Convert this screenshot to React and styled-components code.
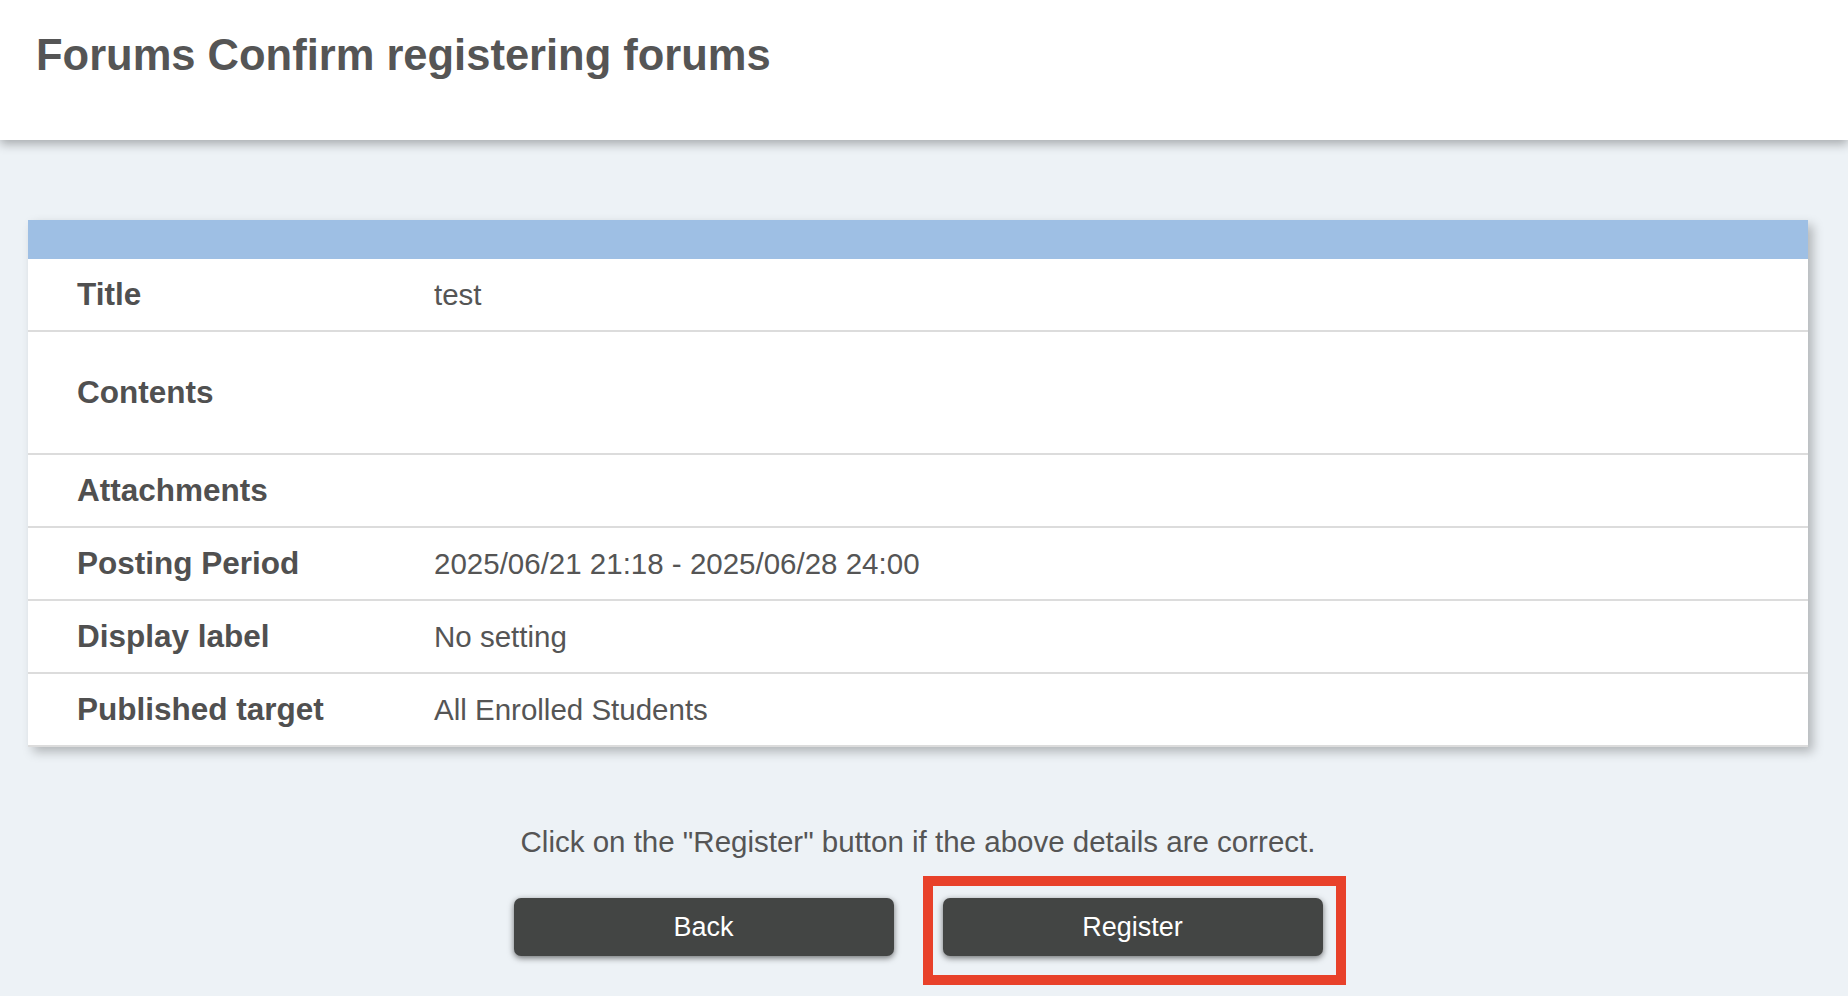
import styled, { createGlobalStyle } from 'styled-components';

const GlobalStyle = createGlobalStyle`
    html, body {
        margin: 0;
        padding: 0;
        background: #edf2f6;
        font-family: "Liberation Sans", Arial, sans-serif;
        color: #555555;
    }
`;

const rows = [
    { label: 'Title', value: 'test' },
    { label: 'Contents', value: '', tall: true },
    { label: 'Attachments', value: '' },
    { label: 'Posting Period', value: '2025/06/21 21:18 - 2025/06/28 24:00' },
    { label: 'Display label', value: 'No setting' },
    { label: 'Published target', value: 'All Enrolled Students' },
];

function App() {
    return (
        <>
            <GlobalStyle />
            <PageStyled>
                <HeaderStyle>
                    <TitleStyle>Forums Confirm registering forums</TitleStyle>
                </HeaderStyle>

                <MainStyle>
                    <CardStyle>
                        <CardHeadStyle />
                        {rows.map(row => (
                            <RowStyle key={row.label} $tall={row.tall}>
                                <LabelStyle>{row.label}</LabelStyle>
                                <ValueStyle>{row.value}</ValueStyle>
                            </RowStyle>
                        ))}
                    </CardStyle>

                    <NoticeStyle>
                        Click on the "Register" button if the above details are
                        correct.
                    </NoticeStyle>

                    <ButtonRowStyle>
                        <ButtonStyle type="button">Back</ButtonStyle>
                        <ButtonSlotStyle>
                            <ButtonStyle type="submit">Register</ButtonStyle>
                            <HighlightStyle />
                        </ButtonSlotStyle>
                    </ButtonRowStyle>
                </MainStyle>
            </PageStyled>
        </>
    );
}

export default App;

const PageStyled = styled.div`
    min-height: 996px;
    background: #edf2f6;
`;

const HeaderStyle = styled.header`
    position: relative;
    z-index: 1;
    height: 140px;
    box-sizing: border-box;
    padding: 31px 36px 0;
    background: #ffffff;
    box-shadow: 0 4px 10px rgba(0, 0, 0, 0.3);
`;

const TitleStyle = styled.h1`
    margin: 0;
    font-size: 43.5px;
    font-weight: 700;
    line-height: normal;
    color: #555555;
`;

const MainStyle = styled.main`
    padding: 80px 40px 0 28px;
    display: flex;
    flex-direction: column;
    align-items: center;
`;

const CardStyle = styled.section`
    width: 100%;
    background: #ffffff;
    box-shadow: 5px 5px 10px rgba(0, 0, 0, 0.25);
`;

const CardHeadStyle = styled.div`
    height: 39px;
    background: #9ebfe4;
`;

const RowStyle = styled.div`
    display: flex;
    align-items: center;
    height: ${props => (props.$tall ? '121px' : '71px')};
    border-bottom: 2px solid #dcdcdc;
`;

const LabelStyle = styled.div`
    width: 406px;
    flex-shrink: 0;
    box-sizing: border-box;
    padding-left: 49px;
    font-size: 31.5px;
    font-weight: 700;
    color: #505050;
`;

const ValueStyle = styled.div`
    font-size: 29.5px;
    color: #555555;
`;

const NoticeStyle = styled.p`
    margin: 78px 0 0;
    font-size: 29.5px;
    line-height: 34px;
    color: #555555;
`;

const ButtonRowStyle = styled.div`
    display: flex;
    gap: 49px;
    margin-top: 39px;
`;

const ButtonSlotStyle = styled.div`
    position: relative;
`;

const ButtonStyle = styled.button`
    width: 380px;
    height: 58px;
    border: none;
    border-radius: 7px;
    background: #434544;
    color: #ffffff;
    font-family: "Liberation Sans", Arial, sans-serif;
    font-size: 27px;
    box-shadow: 0 2px 6px rgba(0, 0, 0, 0.55);
    cursor: pointer;
`;

const HighlightStyle = styled.div`
    position: absolute;
    top: -22px;
    left: -20px;
    right: -23px;
    bottom: -29px;
    border: 10px solid #e8412a;
    pointer-events: none;
`;
